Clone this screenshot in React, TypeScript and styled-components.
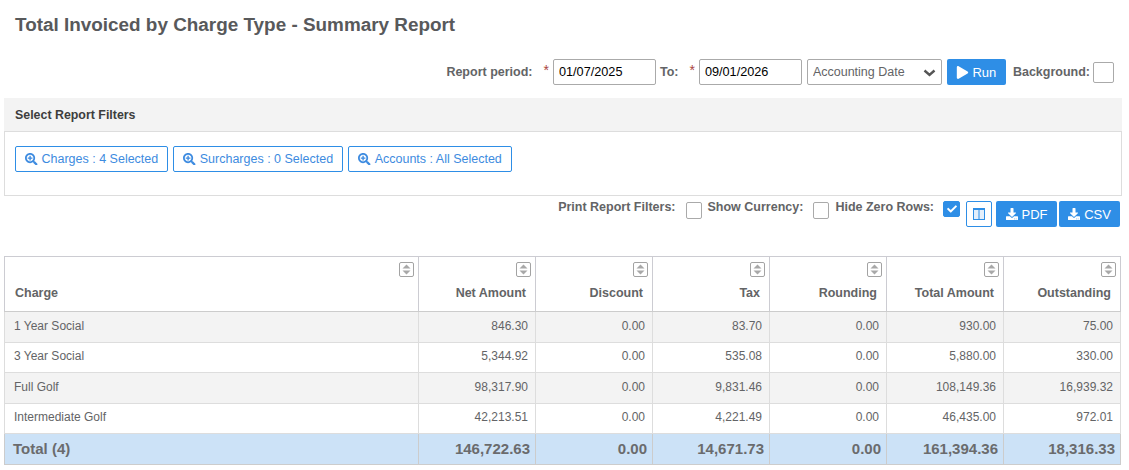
import React from "react";
import styled, { createGlobalStyle } from "styled-components";
import { FaSearchPlus, FaDownload, FaPlay, FaCheck } from "react-icons/fa";

const Global = createGlobalStyle`
  html, body { margin: 0; padding: 0; background: #fff; }
  body { font-family: "Liberation Sans", Arial, sans-serif; font-size: 13px; color: #58595b; }
  * { box-sizing: border-box; }
`;

const Page = styled.div`
  width: 1129px;
  height: 470px;
  overflow: hidden;
  padding: 0 7px 0 4px;
`;

const Title = styled.h1`
  margin: 0;
  padding: 14px 0 0 11px;
  height: 59px;
  font-size: 18.9px;
  line-height: 22px;
  font-weight: 700;
  color: #58595b;
`;

const Toolbar = styled.div`
  display: flex;
  justify-content: flex-end;
  align-items: center;
  height: 26px;
  padding-right: 8px;
`;

const Label = styled.span`
  font-size: 12.5px;
  font-weight: 700;
  color: #636466;
  white-space: nowrap;
`;

const Star = styled.span`
  color: #a94442;
  font-size: 14px;
  margin: 0 4px 0 11px;
  position: relative;
  top: -2px;
`;

const DateInput = styled.input`
  width: 103px;
  height: 26px;
  border: 1px solid #aaa;
  border-radius: 2px;
  padding: 0 5px;
  font-family: inherit;
  font-size: 12.7px;
  color: #000;
  margin-right: 5px;
  outline: none;
`;

const ToLabel = styled(Label)`
  margin-left: -1px;
`;

const SelectWrap = styled.div`
  position: relative;
  width: 135px;
  height: 26px;
  margin: 0 5px 0 0;
`;

const Select = styled.select`
  appearance: none;
  width: 100%;
  height: 100%;
  border: 1px solid #aaa;
  border-radius: 2px;
  background: #fff;
  padding: 0 5px;
  font-family: inherit;
  font-size: 12.5px;
  color: #636466;
  outline: none;
`;

const Chevron = styled.svg`
  position: absolute;
  right: 6px;
  top: 10px;
  width: 13px;
  height: 8px;
`;

const Solid = styled.button<{ $w: number }>`
  display: inline-flex;
  align-items: center;
  justify-content: center;
  gap: 3px;
  width: ${(p) => p.$w}px;
  height: 26px;
  padding: 0;
  border: 0;
  border-radius: 2px;
  background: #2e8ee6;
  color: #fff;
  font-family: inherit;
  font-size: 13px;
  svg { flex: none; }
`;

const BgLabel = styled(Label)`
  margin: 0 3px 0 7px;
`;

const Box = styled.span<{ $on?: boolean }>`
  display: inline-flex;
  align-items: center;
  justify-content: center;
  flex: none;
  width: 16px;
  height: 16px;
  border: 1px solid ${(p) => (p.$on ? "#2e8ee6" : "#aaa")};
  border-radius: 2px;
  background: ${(p) => (p.$on ? "#2e8ee6" : "#fff")};
  color: #fff;
`;

const BigBox = styled(Box)`
  width: 21px;
  height: 21px;
`;

const Panel = styled.section`
  margin-top: 13px;
`;

const PanelHead = styled.div`
  height: 34px;
  background: #f3f3f3;
  border-bottom: 1px solid #ddd;
  padding: 0 11px;
  display: flex;
  align-items: center;
  font-size: 12.4px;
  font-weight: 700;
  color: #3d3d3d;
`;

const PanelBody = styled.div`
  height: 64px;
  border: 1px solid #ddd;
  border-top: 0;
  padding: 14px 10px;
  display: flex;
  gap: 5px;
  align-items: flex-start;
`;

const Outline = styled.button`
  display: inline-flex;
  align-items: center;
  gap: 4px;
  height: 26px;
  padding: 0 9px;
  border: 1px solid #2e8ee6;
  border-radius: 2px;
  background: #fff;
  color: #3d8be0;
  font-family: inherit;
  font-size: 12.5px;
  white-space: nowrap;
`;

const Options = styled.div`
  display: flex;
  justify-content: flex-end;
  align-items: flex-start;
  height: 60px;
  padding: 5px 2px 0 0;
`;

const OptLabel = styled(Label)`
  line-height: 15px;
  margin-top: -1px;
`;

const OptBox = styled(Box)`
  margin: 1px 6px 0 10px;
  height: 17px;
`;

const OnBox = styled(Box)`
  margin: 0 6px 0 9px;
  width: 17px;
`;

const ColsBtn = styled.button`
  width: 26px;
  height: 26px;
  margin: 0 2px 0 0;
  padding: 0;
  display: inline-flex;
  align-items: center;
  justify-content: center;
  border: 1px solid #2e8ee6;
  border-radius: 2px;
  background: #fff;
`;

const DlBtn = styled(Solid)`
  margin-left: 2px;
  gap: 4px;
`;

const Table = styled.table`
  width: 1116px;
  border-collapse: collapse;
  table-layout: fixed;
  font-size: 12px;
`;

const Th = styled.th<{ $left?: boolean }>`
  height: 55px;
  padding: 0 9px 11px 10px;
  border: 1px solid #ccccd2;
  border-bottom-color: #ccc;
  vertical-align: bottom;
  text-align: ${(p) => (p.$left ? "left" : "right")};
  font-size: 12.5px;
  font-weight: 700;
  color: #636466;
  position: relative;
`;

const SortIcon = styled.svg`
  position: absolute;
  top: 5px;
  right: 4px;
  width: 15px;
  height: 15px;
`;

const Tr = styled.tr<{ $alt?: boolean; $h: number }>`
  background: ${(p) => (p.$alt ? "#f3f3f3" : "#fff")};
  height: ${(p) => p.$h}px;
`;

const Td = styled.td<{ $left?: boolean }>`
  padding: ${(p) => (p.$left ? "0 6px 3px 9px" : "0 7px 3px 6px")};
  border: 1px solid #ddd;
  text-align: ${(p) => (p.$left ? "left" : "right")};
  color: #636466;
  font-size: 12px;
`;

const TotalRow = styled.tr`
  background: #cce2f7;
`;

const TotalCell = styled.td<{ $left?: boolean }>`
  height: 31px;
  padding: ${(p) => (p.$left ? "0 0 2px 8px" : "0 5px 2px 0")};
  border: 1px solid #ccc;
  text-align: ${(p) => (p.$left ? "left" : "right")};
  font-size: 15px;
  font-weight: 700;
  color: #6a6b6d;
`;

const Col = styled.col<{ $w: number }>`
  width: ${(p) => p.$w}px;
`;

const columns = ["Net Amount", "Discount", "Tax", "Rounding", "Total Amount", "Outstanding"];
const widths = [414, 117, 117, 117, 117, 117, 117];
const rowHeights = [31, 30, 31, 30];

const rows: [string, string[]][] = [
  ["1 Year Social", ["846.30", "0.00", "83.70", "0.00", "930.00", "75.00"]],
  ["3 Year Social", ["5,344.92", "0.00", "535.08", "0.00", "5,880.00", "330.00"]],
  ["Full Golf", ["98,317.90", "0.00", "9,831.46", "0.00", "108,149.36", "16,939.32"]],
  ["Intermediate Golf", ["42,213.51", "0.00", "4,221.49", "0.00", "46,435.00", "972.01"]],
];

const totals = ["146,722.63", "0.00", "14,671.73", "0.00", "161,394.36", "18,316.33"];

const Sort = () => (
  <SortIcon viewBox="0 0 15 15">
    <rect x="0.5" y="0.5" width="14" height="14" rx="1.5" fill="#fff" stroke="#a3a3a3" />
    <path d="M7.5 2.5 L11.5 6.5 H3.5 Z" fill="#a8a8a8" />
    <path d="M7.5 12.5 L11.5 8.5 H3.5 Z" fill="#a8a8a8" />
  </SortIcon>
);

export default function App() {
  return (
    <Page>
      <Global />
      <Title>Total Invoiced by Charge Type - Summary Report</Title>
      <Toolbar>
        <Label>Report period:</Label>
        <Star>*</Star>
        <DateInput readOnly value="01/07/2025" />
        <ToLabel>To:</ToLabel>
        <Star>*</Star>
        <DateInput readOnly value="09/01/2026" />
        <SelectWrap>
          <Select defaultValue="Accounting Date">
            <option>Accounting Date</option>
          </Select>
          <Chevron viewBox="0 0 13 8">
            <path d="M1.5 1.5 L6.5 6 L11.5 1.5" fill="none" stroke="#555" strokeWidth="2.4" />
          </Chevron>
        </SelectWrap>
        <Solid $w={59}>
          <FaPlay size={13} />
          Run
        </Solid>
        <BgLabel>Background:</BgLabel>
        <BigBox />
      </Toolbar>
      <Panel>
        <PanelHead>Select Report Filters</PanelHead>
        <PanelBody>
          <Outline><FaSearchPlus size={12.5} />Charges : 4 Selected</Outline>
          <Outline><FaSearchPlus size={12.5} />Surcharges : 0 Selected</Outline>
          <Outline><FaSearchPlus size={12.5} />Accounts : All Selected</Outline>
        </PanelBody>
      </Panel>
      <Options>
        <OptLabel>Print Report Filters:</OptLabel>
        <OptBox />
        <OptLabel>Show Currency:</OptLabel>
        <OptBox />
        <OptLabel>Hide Zero Rows:</OptLabel>
        <OnBox $on><FaCheck size={10} /></OnBox>
        <ColsBtn aria-label="Columns">
          <svg width="12" height="12" viewBox="0 0 12 12">
            <rect x="0.5" y="0.5" width="11" height="11" fill="#e4effb" stroke="#2e8ee6" />
            <path d="M6 0.5 V11.5 M0.5 1.5 H11.5" stroke="#2e8ee6" fill="none" />
          </svg>
        </ColsBtn>
        <DlBtn $w={61}><FaDownload size={12} />PDF</DlBtn>
        <DlBtn $w={61}><FaDownload size={12} />CSV</DlBtn>
      </Options>
      <Table>
        <colgroup>
          {widths.map((w, i) => (
            <Col key={i} $w={w} />
          ))}
        </colgroup>
        <thead>
          <tr>
            <Th $left>Charge<Sort /></Th>
            {columns.map((c) => (
              <Th key={c}>{c}<Sort /></Th>
            ))}
          </tr>
        </thead>
        <tbody>
          {rows.map(([name, vals], i) => (
            <Tr key={name} $alt={i % 2 === 0} $h={rowHeights[i]}>
              <Td $left>{name}</Td>
              {vals.map((v, j) => (
                <Td key={j}>{v}</Td>
              ))}
            </Tr>
          ))}
          <TotalRow>
            <TotalCell $left>Total (4)</TotalCell>
            {totals.map((v, j) => (
              <TotalCell key={j}>{v}</TotalCell>
            ))}
          </TotalRow>
        </tbody>
      </Table>
    </Page>
  );
}
